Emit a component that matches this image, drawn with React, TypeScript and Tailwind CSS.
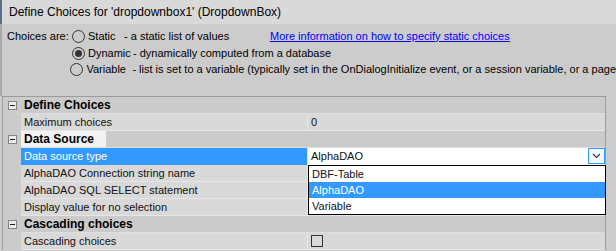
import React from "react";

const font = { fontFamily: '"Liberation Sans", Arial, sans-serif' };

function Minus() {
  return (
    <div className="w-[9px] h-[9px] border border-[#858585] bg-[#ececec] flex items-center justify-center">
      <div className="w-[5px] h-[1px] bg-[#222]" />
    </div>
  );
}

function Radio({ checked }: { checked?: boolean }) {
  return (
    <div className="w-[13px] h-[13px] rounded-full border border-[#333] flex items-center justify-center shrink-0">
      {checked && <div className="w-[7px] h-[7px] rounded-full bg-[#333]" />}
    </div>
  );
}

function Header({ label, focused }: { label: string; focused?: boolean }) {
  return (
    <div className="flex h-[17px]">
      <div className="w-[18px] bg-[#cbcbcb] flex items-center justify-center pl-[1px]">
        <Minus />
      </div>
      <div className="flex-1 bg-[#cbcbcb] border-b border-[#dedede] flex">
        <div
          className={
            "h-full flex items-center pl-[3px] pr-[12px] text-[12px] font-bold text-black " +
            (focused ? "bg-[#f2f2f2]" : "")
          }
        >
          {label}
        </div>
      </div>
    </div>
  );
}

function Row({
  label,
  value,
  selected,
  children,
}: {
  label: string;
  value?: React.ReactNode;
  selected?: boolean;
  children?: React.ReactNode;
}) {
  return (
    <div className="flex h-[17px]">
      <div className="w-[18px] bg-[#cbcbcb]" />
      <div
        className={
          "w-[286px] flex items-center pl-[3px] text-[11px] border-b " +
          (selected
            ? "bg-[#3399ff] text-white border-[#3399ff]"
            : "bg-[#d9d9d9] text-[#111] border-[#e6e6e6]")
        }
      >
        {label}
      </div>
      <div className="w-[1px] bg-[#e6e6e6]" />
      {children ?? (
        <div className="flex-1 bg-[#d9d9d9] border-b border-[#e6e6e6] flex items-center pl-[3px] text-[11px] text-[#111]">
          {value}
        </div>
      )}
    </div>
  );
}

export default function App() {
  return (
    <div
      className="w-[616px] h-[251px] bg-[#cccccc] overflow-hidden relative text-black"
      style={font}
    >
      {/* Title */}
      <div className="h-[24px] bg-[#d9d9d9] flex items-center pl-[7px] text-[12px] border-l-2 border-[#5b6f8c]">
        Define Choices for 'dropdownbox1' (DropdownBox)
      </div>

      {/* Choices */}
      <div className="h-[72px] border-l-2 border-[#a8a8a8] text-[11px] pt-[4px] whitespace-nowrap">
        <div className="flex h-[16px] items-center">
          <div className="w-[70px] pl-[5px]">Choices are:</div>
          <Radio />
          <div className="w-[39px] pl-[3px]">Static</div>
          <div className="w-[146px]">- a static list of values</div>
          <a className="text-[#0000ff] underline" href="#">
            More information on how to specify static choices
          </a>
        </div>
        <div className="flex h-[16px] items-center mt-[1px]">
          <div className="w-[70px]" />
          <Radio checked />
          <div className="w-[48px] pl-[3px]">Dynamic</div>
          <div>- dynamically computed from a database</div>
        </div>
        <div className="flex h-[16px] items-center">
          <div className="w-[70px]" />
          <Radio />
          <div className="w-[50px] pl-[3px]">Variable</div>
          <div>
            - list is set to a variable (typically set in the OnDialogInitialize event, or a session
            variable, or a page
          </div>
        </div>
      </div>

      {/* Property grid */}
      <div className="ml-[2px] w-[604px] border-l border-t border-r border-[#9c9c9c] relative">
        <Header label="Define Choices" />
        <Row label="Maximum choices" value="0" />
        <Header label="Data Source" focused />
        <Row label="Data source type" selected>
          <div className="flex-1 bg-white flex items-center pl-[3px] text-[11px] text-[#111] relative">
            AlphaDAO
            <div className="absolute right-0 top-0 w-[17px] h-[16px] border border-[#3399ff] bg-[#f4f9ff] flex items-center justify-center">
              <svg width="9" height="6" viewBox="0 0 9 6">
                <path d="M1 1 L4.5 4.5 L8 1" fill="none" stroke="#333" strokeWidth="1.1" />
              </svg>
            </div>
          </div>
        </Row>
        <Row label="AlphaDAO Connection string name" value="" />
        <Row label="AlphaDAO SQL SELECT statement" value="" />
        <Row label="Display value for no selection" value="" />
        <Header label="Cascading choices" />
        <Row
          label="Cascading choices"
          value={<div className="w-[12px] h-[12px] border border-[#333]" />}
        />

        {/* Dropdown list */}
        <div className="absolute left-[305px] top-[68px] w-[298px] h-[50px] border border-black bg-white text-[11px] text-[#111]">
          <div className="h-[16px] flex items-center pl-[3px]">DBF-Table</div>
          <div className="h-[16px] flex items-center pl-[3px] bg-[#3399ff] text-white">AlphaDAO</div>
          <div className="h-[16px] flex items-center pl-[3px]">Variable</div>
        </div>
      </div>
    </div>
  );
}
